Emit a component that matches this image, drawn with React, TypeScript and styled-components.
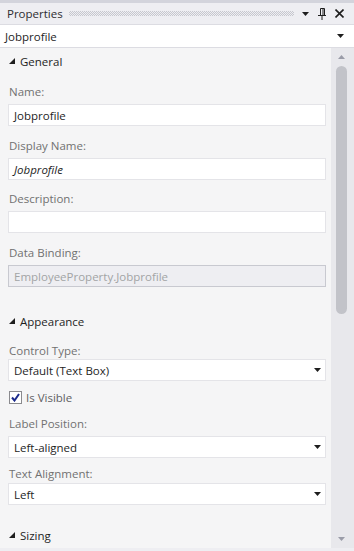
import React from 'react';
import styled, { createGlobalStyle } from 'styled-components';

const GlobalStyle = createGlobalStyle`
  html, body {
    margin: 0;
    padding: 0;
    background: #eeeef2;
  }

  body {
    font-family: 'Open Sans', 'Noto Sans', sans-serif;
    font-size: 11.5px;
    color: #1e1e1e;
  }
`;

const DownArrow = ({ color = '#1e1e1e' }: { color?: string }) => (
  <svg width="7" height="4" viewBox="0 0 7 4">
    <polygon points="0,0 7,0 3.5,4" fill={color} />
  </svg>
);

const UpArrow = () => (
  <svg width="7" height="4" viewBox="0 0 7 4">
    <polygon points="0,4 7,4 3.5,0" fill="#9a9ca8" />
  </svg>
);

const ExpandedTriangle = () => (
  <svg width="6" height="6" viewBox="0 0 6 6">
    <polygon points="6,0 6,6 0,6" fill="#1e1e1e" />
  </svg>
);

const PinIcon = () => (
  <svg width="8" height="12" viewBox="0 0 8 12">
    <path d="M2.5 0.5 H6.5 V7.5 M2.5 0.5 V7.5 M5 0.5 V7.5" stroke="#1e1e1e" strokeWidth="1" fill="none" />
    <path d="M0 7.5 H8 M4 7.5 V12" stroke="#1e1e1e" strokeWidth="1" fill="none" />
  </svg>
);

const CloseIcon = () => (
  <svg width="9" height="9" viewBox="0 0 9 9">
    <path d="M0.5 0.5 L8.5 8.5 M8.5 0.5 L0.5 8.5" stroke="#1e1e1e" strokeWidth="1.6" fill="none" />
  </svg>
);

const CheckMark = () => (
  <svg width="9" height="9" viewBox="0 0 9 9">
    <path d="M1 4.5 L3.5 7.5 L8 1" stroke="#1b2a8c" strokeWidth="2" fill="none" />
  </svg>
);

const App = () => {
  return (
    <>
      <GlobalStyle />
      <S.Panel>
        <S.TopStrip />
        <S.TitleBar>
          <S.Title>Properties</S.Title>
          <S.Grip />
          <S.TitleButtons>
            <DownArrow />
            <PinIcon />
            <CloseIcon />
          </S.TitleButtons>
        </S.TitleBar>

        <S.ObjectCombo>
          <span>Jobprofile</span>
          <DownArrow />
        </S.ObjectCombo>

        <S.Body>
          <S.Content>
            <S.SectionHeader $mt={0}>
              <ExpandedTriangle />
              <span>General</span>
            </S.SectionHeader>

            <S.Label $mt={10}>Name:</S.Label>
            <S.Input $mt={4}>Jobprofile</S.Input>

            <S.Label $mt={12}>Display Name:</S.Label>
            <S.Input $mt={4} $italic>
              Jobprofile
            </S.Input>

            <S.Label $mt={11}>Description:</S.Label>
            <S.Input $mt={4} />

            <S.Label $mt={12}>Data Binding:</S.Label>
            <S.Input $mt={4} $disabled>
              EmployeeProperty.Jobprofile
            </S.Input>

            <S.SectionHeader $mt={21}>
              <ExpandedTriangle />
              <span>Appearance</span>
            </S.SectionHeader>

            <S.Label $mt={9}>Control Type:</S.Label>
            <S.Select $mt={0}>
              <span>Default (Text Box)</span>
              <DownArrow />
            </S.Select>

            <S.CheckRow>
              <S.CheckBox>
                <CheckMark />
              </S.CheckBox>
              <span>Is Visible</span>
            </S.CheckRow>

            <S.Label $mt={11}>Label Position:</S.Label>
            <S.Select $mt={4}>
              <span>Left-aligned</span>
              <DownArrow />
            </S.Select>

            <S.Label $mt={8}>Text Alignment:</S.Label>
            <S.Select $mt={1}>
              <span>Left</span>
              <DownArrow />
            </S.Select>

            <S.SectionHeader $mt={17}>
              <ExpandedTriangle />
              <span>Sizing</span>
            </S.SectionHeader>
          </S.Content>

          <S.ScrollBar>
            <S.ScrollButton>
              <UpArrow />
            </S.ScrollButton>
            <S.Thumb />
            <S.ScrollSpacer />
            <S.ScrollButton>
              <DownArrow color="#9a9ca8" />
            </S.ScrollButton>
          </S.ScrollBar>
        </S.Body>
        <S.BottomStrip />
      </S.Panel>
    </>
  );
};

export default App;

const S = {
  Panel: styled.div`
    display: flex;
    flex-direction: column;

    width: 354px;
    height: 551px;
    overflow: hidden;

    background: #eeeef2;
  `,

  TopStrip: styled.div`
    height: 3px;
    background: #d3d4dc;
  `,

  TitleBar: styled.div`
    display: flex;
    align-items: center;

    height: 21px;
    padding: 0 10px 0 7px;
  `,

  Title: styled.div`
    color: #2d2d30;
    line-height: 16px;
  `,

  Grip: styled.div`
    flex: 1;
    height: 5px;
    margin: 0 8px 0 6px;

    background: repeating-conic-gradient(#c6c7ce 0 25%, transparent 0 50%) 0 0 / 2px 2px;
  `,

  TitleButtons: styled.div`
    display: flex;
    align-items: center;
    gap: 9px;
  `,

  ObjectCombo: styled.div`
    display: flex;
    align-items: center;
    justify-content: space-between;

    height: 24px;
    box-sizing: border-box;
    padding: 0 10px 0 5px;

    border-top: 1px solid #dcdce2;
    border-bottom: 1px solid #dcdce2;
    background: #ffffff;
  `,

  Body: styled.div`
    display: flex;
    flex: 1;
    min-height: 0;

    background: #f5f5f6;
  `,

  Content: styled.div`
    display: flex;
    flex-direction: column;

    width: 331px;
    box-sizing: border-box;
    padding: 0 5px 0 8px;
  `,

  SectionHeader: styled.div<{ $mt: number }>`
    display: flex;
    align-items: center;
    gap: 5px;

    height: 26px;
    margin-top: ${({ $mt }) => $mt}px;
    padding-left: 1px;

    color: #1e1e1e;
  `,

  Label: styled.div<{ $mt: number }>`
    height: 16px;
    margin-top: ${({ $mt }) => $mt}px;
    padding-left: 1px;

    line-height: 16px;
    color: #717171;
  `,

  Input: styled.div<{ $mt: number; $italic?: boolean; $disabled?: boolean }>`
    display: flex;
    align-items: center;

    height: 22px;
    box-sizing: border-box;
    margin-top: ${({ $mt }) => $mt}px;
    padding: 0 5px;

    border: 1px solid ${({ $disabled }) => ($disabled ? '#c8c9d0' : '#e4e4e8')};
    background: ${({ $disabled }) => ($disabled ? '#eeeef2' : '#ffffff')};

    color: ${({ $disabled }) => ($disabled ? '#a2a4a5' : '#1e1e1e')};
    font-style: ${({ $italic }) => ($italic ? 'italic' : 'normal')};
  `,

  Select: styled.div<{ $mt: number }>`
    display: flex;
    align-items: center;
    justify-content: space-between;

    height: 22px;
    box-sizing: border-box;
    margin-top: ${({ $mt }) => $mt}px;
    padding: 0 4px 0 5px;

    border: 1px solid #e4e4e8;
    background: #ffffff;
  `,

  CheckRow: styled.div`
    display: flex;
    align-items: center;
    gap: 4px;

    height: 16px;
    margin-top: 8px;
    padding-left: 1px;

    color: #5f5f63;
  `,

  CheckBox: styled.div`
    display: flex;
    align-items: center;
    justify-content: center;

    width: 13px;
    height: 13px;
    box-sizing: border-box;

    border: 1px solid #8a8a8e;
    background: #ffffff;
  `,

  ScrollBar: styled.div`
    display: flex;
    flex-direction: column;
    align-items: center;

    width: 23px;
    padding-right: 2px;
    box-sizing: border-box;

    background: #e8e8ec;
  `,

  ScrollButton: styled.div`
    display: flex;
    align-items: center;
    justify-content: center;

    height: 18px;
    width: 100%;
  `,

  Thumb: styled.div`
    width: 11px;
    height: 248px;
    border-radius: 6px;

    background: #c2c3c9;
  `,

  ScrollSpacer: styled.div`
    flex: 1;
  `,

  BottomStrip: styled.div`
    height: 3px;
    background: #eeeef2;
  `,
};
